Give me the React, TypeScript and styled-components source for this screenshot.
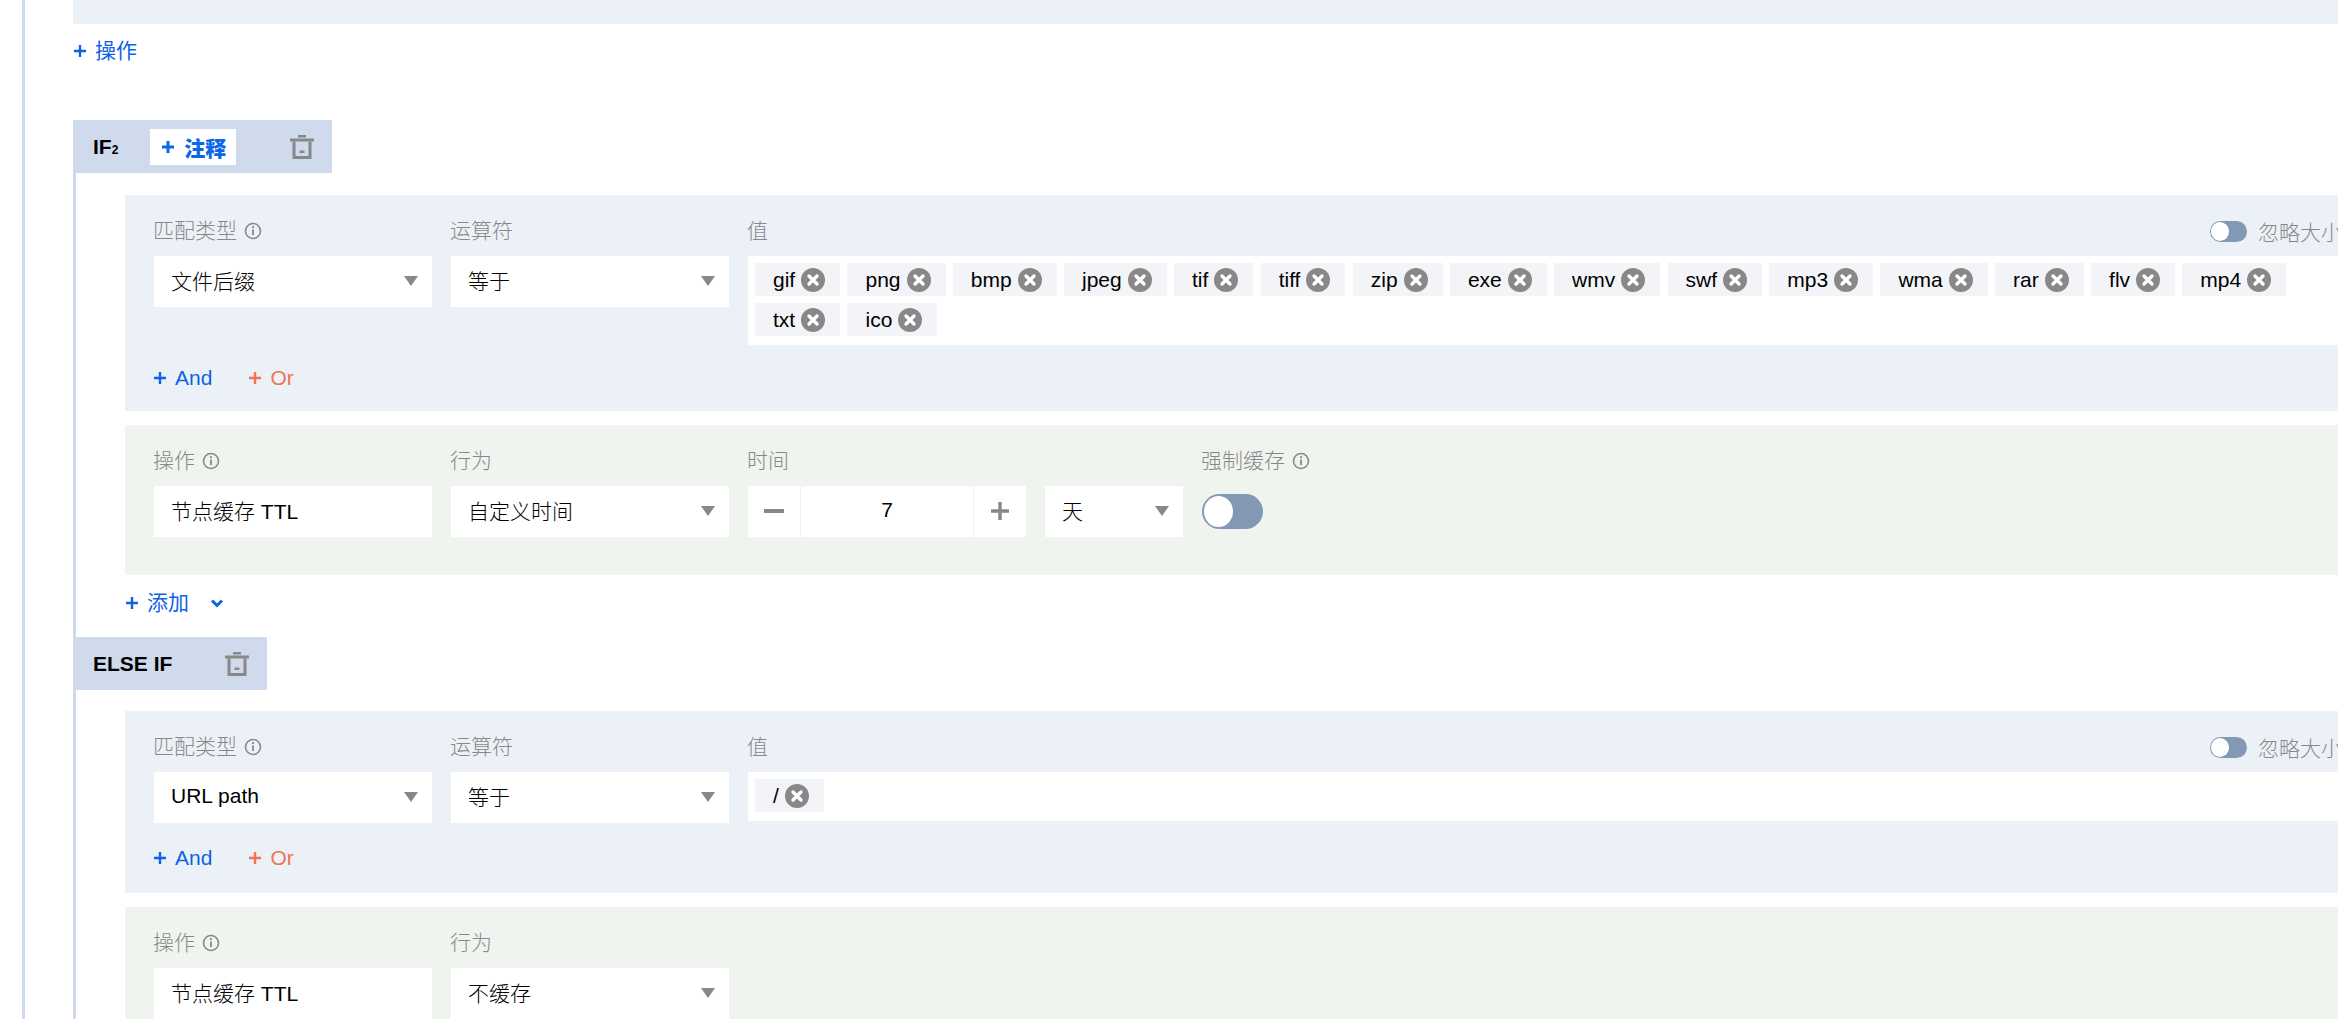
import React from "react";
import styled, {createGlobalStyle} from "styled-components";

const GlobalStyle = createGlobalStyle`
  html, body {
    margin: 0;
    padding: 0;
    background: #fff;
    overflow: hidden;
  }
  * {
    box-sizing: border-box;
  }
`;

const Page = styled.div`
  width: 2338px;
  height: 1019px;
  overflow: hidden;
  padding-left: 22px;
  font-family: "Liberation Sans", "Noto Sans CJK SC", sans-serif;
  font-size: 21px;
  color: #000;
`;

const Rail = styled.div`
  width: 2420px;
  min-height: 1019px;
  border-left: 3px solid #cfdaec;
  padding-left: 48px;
`;

const TopBlock = styled.div`
  height: 24px;
  background: #ecf1f8;
`;

const LinkButton = styled.div<{$tone?: "blue" | "orange"}>`
  display: inline-flex;
  align-items: center;
  gap: 8px;
  height: 30px;
  color: ${(p) => (p.$tone === "orange" ? "#f2734f" : "#0f62e6")};
  line-height: 30px;
`;

const PlusGlyph = styled.svg`
  width: 14px;
  height: 14px;
  flex: none;
`;

const AddOperation = styled.div`
  height: 96px;
  padding-top: 12px;
`;

const Block = styled.div`
  border-left: 3px solid #cfdaec;
  padding-left: 49px;
`;

const HeaderBar = styled.div<{$width: number}>`
  display: flex;
  align-items: center;
  width: ${(p) => p.$width}px;
  height: 53px;
  margin-left: -52px;
  background: #cfdbed;
  padding-left: 20px;
  font-weight: 700;
  font-size: 21px;
`;

const ElseBar = styled(HeaderBar)`
  margin-left: -49px;
  padding-left: 17px;
`;

const Small = styled.span`
  font-size: 12px;
  margin-top: 6px;
`;

const NoteButton = styled.div`
  display: flex;
  align-items: center;
  gap: 9px;
  width: 86px;
  height: 36px;
  margin-left: 32px;
  padding-left: 11px;
  background: #fff;
  color: #0a68e8;
  font-size: 21px;
  font-weight: 900;
`;

const TrashSlot = styled.div<{$left: number}>`
  display: flex;
  margin-left: ${(p) => p.$left}px;
`;

const Panel = styled.div<{$tone: "blue" | "green"; $height: number}>`
  height: ${(p) => p.$height}px;
  background: ${(p) => (p.$tone === "blue" ? "#ecf1f8" : "#f0f4ef")};
  padding: 21px 0 0 29px;
`;

const Row = styled.div`
  display: flex;
  align-items: flex-start;
  gap: 19px;
`;

const Field = styled.div<{$width: number}>`
  width: ${(p) => p.$width}px;
  flex: none;
`;

const LabelRow = styled.div`
  display: flex;
  align-items: center;
  justify-content: space-between;
  height: 30px;
  margin-bottom: 10px;
`;

const Label = styled.div`
  display: flex;
  align-items: center;
  gap: 7px;
  margin-left: -1px;
  color: #888;
  font-weight: 300;
  line-height: 30px;
`;

const InfoIcon = styled.svg`
  width: 18px;
  height: 18px;
  flex: none;
`;

const Control = styled.div`
  display: flex;
  align-items: center;
  justify-content: space-between;
  height: 51px;
  padding: 0 14px 4px 17px;
  background: #fff;
  font-weight: 300;
  white-space: nowrap;
`;

const Caret = styled.span`
  width: 0;
  height: 0;
  margin-top: 3px;
  border-left: 7px solid transparent;
  border-right: 7px solid transparent;
  border-top: 10px solid #888;
`;

const TagBox = styled.div`
  display: flex;
  flex-wrap: wrap;
  align-content: flex-start;
  gap: 7px 7.3px;
  padding: 7px 7px 9px 7px;
  background: #fff;
`;

const Tag = styled.div`
  display: flex;
  align-items: center;
  gap: 6px;
  height: 33px;
  padding: 0 15px 0 18px;
  background: #f3f4f7;
  white-space: nowrap;
`;

const CloseCircle = styled.svg`
  width: 24px;
  height: 24px;
  flex: none;
`;

const CaseToggle = styled.div`
  display: flex;
  align-items: center;
  gap: 11px;
  color: #888;
  font-weight: 300;
  white-space: nowrap;
`;

const Switch = styled.div<{$big?: boolean}>`
  position: relative;
  width: ${(p) => (p.$big ? 61 : 37)}px;
  height: ${(p) => (p.$big ? 35 : 21)}px;
  border-radius: 18px;
  background: #8298b4;

  &::after {
    content: "";
    position: absolute;
    left: ${(p) => (p.$big ? 2 : 1)}px;
    top: ${(p) => (p.$big ? 2 : 1)}px;
    width: ${(p) => (p.$big ? 29 : 18)}px;
    height: ${(p) => (p.$big ? 31 : 19)}px;
    border-radius: 50%;
    background: #fff;
  }
`;

const SwitchCell = styled.div`
  display: flex;
  align-items: center;
  height: 51px;
`;

const AndOr = styled.div<{$top: number}>`
  display: flex;
  gap: 36px;
  margin: ${(p) => p.$top}px 0 0 -1px;
`;

const Stepper = styled.div`
  display: flex;
  height: 51px;
  background: #fff;
  font-weight: 300;
`;

const StepButton = styled.div<{$width: number}>`
  display: flex;
  align-items: center;
  justify-content: center;
  width: ${(p) => p.$width}px;
  padding-bottom: 2px;
  flex: none;
`;

const StepValue = styled.div`
  flex: 1;
  display: flex;
  align-items: center;
  justify-content: center;
  padding-bottom: 3px;
  border-left: 1px solid #eef0f3;
  border-right: 1px solid #eef0f3;
`;

const AddRow = styled.div`
  display: flex;
  align-items: center;
  gap: 21px;
  height: 62px;
  padding-bottom: 6px;
`;

const Gap = styled.div<{$height: number}>`
  height: ${(p) => p.$height}px;
`;

const Plus = ({color, weight = 2.4}: {color: string; weight?: number}) => (
  <PlusGlyph viewBox="0 0 14 14">
    <path d="M7 1v12M1 7h12" stroke={color} strokeWidth={weight} fill="none" />
  </PlusGlyph>
);

const Info = () => (
  <InfoIcon viewBox="0 0 18 18">
    <circle cx="9" cy="9" r="7.5" fill="none" stroke="#888" strokeWidth="1.6" />
    <path d="M9 7.6v5.4" stroke="#888" strokeWidth="1.8" />
    <circle cx="9" cy="5.2" r="1.1" fill="#888" />
  </InfoIcon>
);

const Trash = () => (
  <svg width="24" height="24" viewBox="0 0 24 24">
    <path d="M8 0h8v2.5H8zM0 3.5h24v3H0z" fill="#888" />
    <path d="M4 6.5V22.5h16V6.5" fill="none" stroke="#888" strokeWidth="3" />
    <path d="M9.5 15.5h5v2.5h-5z" fill="#888" />
  </svg>
);

const Close = () => (
  <CloseCircle viewBox="0 0 24 24">
    <circle cx="12" cy="12" r="12" fill="#888" />
    <path d="M8 8l8 8M16 8l-8 8" stroke="#fff" strokeWidth="3.4" strokeLinecap="round" />
  </CloseCircle>
);

const Select = ({children}: {children: React.ReactNode}) => (
  <Control>
    <span>{children}</span>
    <Caret />
  </Control>
);

const fileTypes = [
  "gif", "png", "bmp", "jpeg", "tif", "tiff", "zip", "exe", "wmv",
  "swf", "mp3", "wma", "rar", "flv", "mp4", "txt", "ico",
];

const MatchPanel = ({
  type,
  tags,
  height,
  andTop,
}: {
  type: string;
  tags: string[];
  height: number;
  andTop: number;
}) => (
  <Panel $tone="blue" $height={height}>
    <Row>
      <Field $width={278}>
        <LabelRow>
          <Label>
            匹配类型
            <Info />
          </Label>
        </LabelRow>
        <Select>{type}</Select>
      </Field>
      <Field $width={278}>
        <LabelRow>
          <Label>运算符</Label>
        </LabelRow>
        <Select>等于</Select>
      </Field>
      <Field $width={1615}>
        <LabelRow>
          <Label>值</Label>
          <CaseToggle>
            <Switch />
            忽略大小写
          </CaseToggle>
        </LabelRow>
        <TagBox>
          {tags.map((t) => (
            <Tag key={t}>
              {t}
              <Close />
            </Tag>
          ))}
        </TagBox>
      </Field>
    </Row>
    <AndOr $top={andTop}>
      <LinkButton>
        <Plus color="#0f62e6" />
        And
      </LinkButton>
      <LinkButton $tone="orange">
        <Plus color="#f2734f" />
        Or
      </LinkButton>
    </AndOr>
  </Panel>
);

const ActionLabels = ({time}: {time: boolean}) => (
  <>
    <Field $width={278}>
      <LabelRow>
        <Label>
          操作
          <Info />
        </Label>
      </LabelRow>
      <Control>节点缓存 TTL</Control>
    </Field>
    <Field $width={278}>
      <LabelRow>
        <Label>行为</Label>
      </LabelRow>
      <Select>{time ? "自定义时间" : "不缓存"}</Select>
    </Field>
  </>
);

export default function App() {
  return (
    <Page>
      <GlobalStyle />
      <Rail>
        <TopBlock />
        <AddOperation>
          <LinkButton>
            <Plus color="#0f62e6" />
            操作
          </LinkButton>
        </AddOperation>

        <Block>
          <HeaderBar $width={259}>
            IF<Small>2</Small>
            <NoteButton>
              <Plus color="#0a68e8" weight={3} />
              注释
            </NoteButton>
            <TrashSlot $left={54}>
              <Trash />
            </TrashSlot>
          </HeaderBar>
          <Gap $height={22} />
          <MatchPanel type="文件后缀" tags={fileTypes} height={216} andTop={18} />
          <Gap $height={14} />
          <Panel $tone="green" $height={150}>
            <Row>
              <ActionLabels time />
              <Field $width={278}>
                <LabelRow>
                  <Label>时间</Label>
                </LabelRow>
                <Stepper>
                  <StepButton $width={52}>
                    <svg width="20" height="4" viewBox="0 0 20 4">
                      <path d="M0 0h20v4H0z" fill="#888" />
                    </svg>
                  </StepButton>
                  <StepValue>7</StepValue>
                  <StepButton $width={52}>
                    <svg width="18" height="18" viewBox="0 0 18 18">
                      <path d="M9 0v18M0 9h18" stroke="#888" strokeWidth="3.4" />
                    </svg>
                  </StepButton>
                </Stepper>
              </Field>
              <Field $width={138}>
                <LabelRow />
                <Select>天</Select>
              </Field>
              <Field $width={180}>
                <LabelRow>
                  <Label>
                    强制缓存
                    <Info />
                  </Label>
                </LabelRow>
                <SwitchCell>
                  <Switch $big />
                </SwitchCell>
              </Field>
            </Row>
          </Panel>
          <AddRow>
            <LinkButton>
              <Plus color="#0f62e6" />
              添加
            </LinkButton>
            <svg width="14" height="9" viewBox="0 0 14 9">
              <path d="M2 1.5L7 6.5l5-5" fill="none" stroke="#0f62e6" strokeWidth="3" />
            </svg>
          </AddRow>
          <ElseBar $width={191}>
            ELSE IF
            <TrashSlot $left={53}>
              <Trash />
            </TrashSlot>
          </ElseBar>
          <Gap $height={21} />
          <MatchPanel type="URL path" tags={["/"]} height={182} andTop={20} />
          <Gap $height={14} />
          <Panel $tone="green" $height={150}>
            <Row>
              <ActionLabels time={false} />
            </Row>
          </Panel>
        </Block>
      </Rail>
    </Page>
  );
}
